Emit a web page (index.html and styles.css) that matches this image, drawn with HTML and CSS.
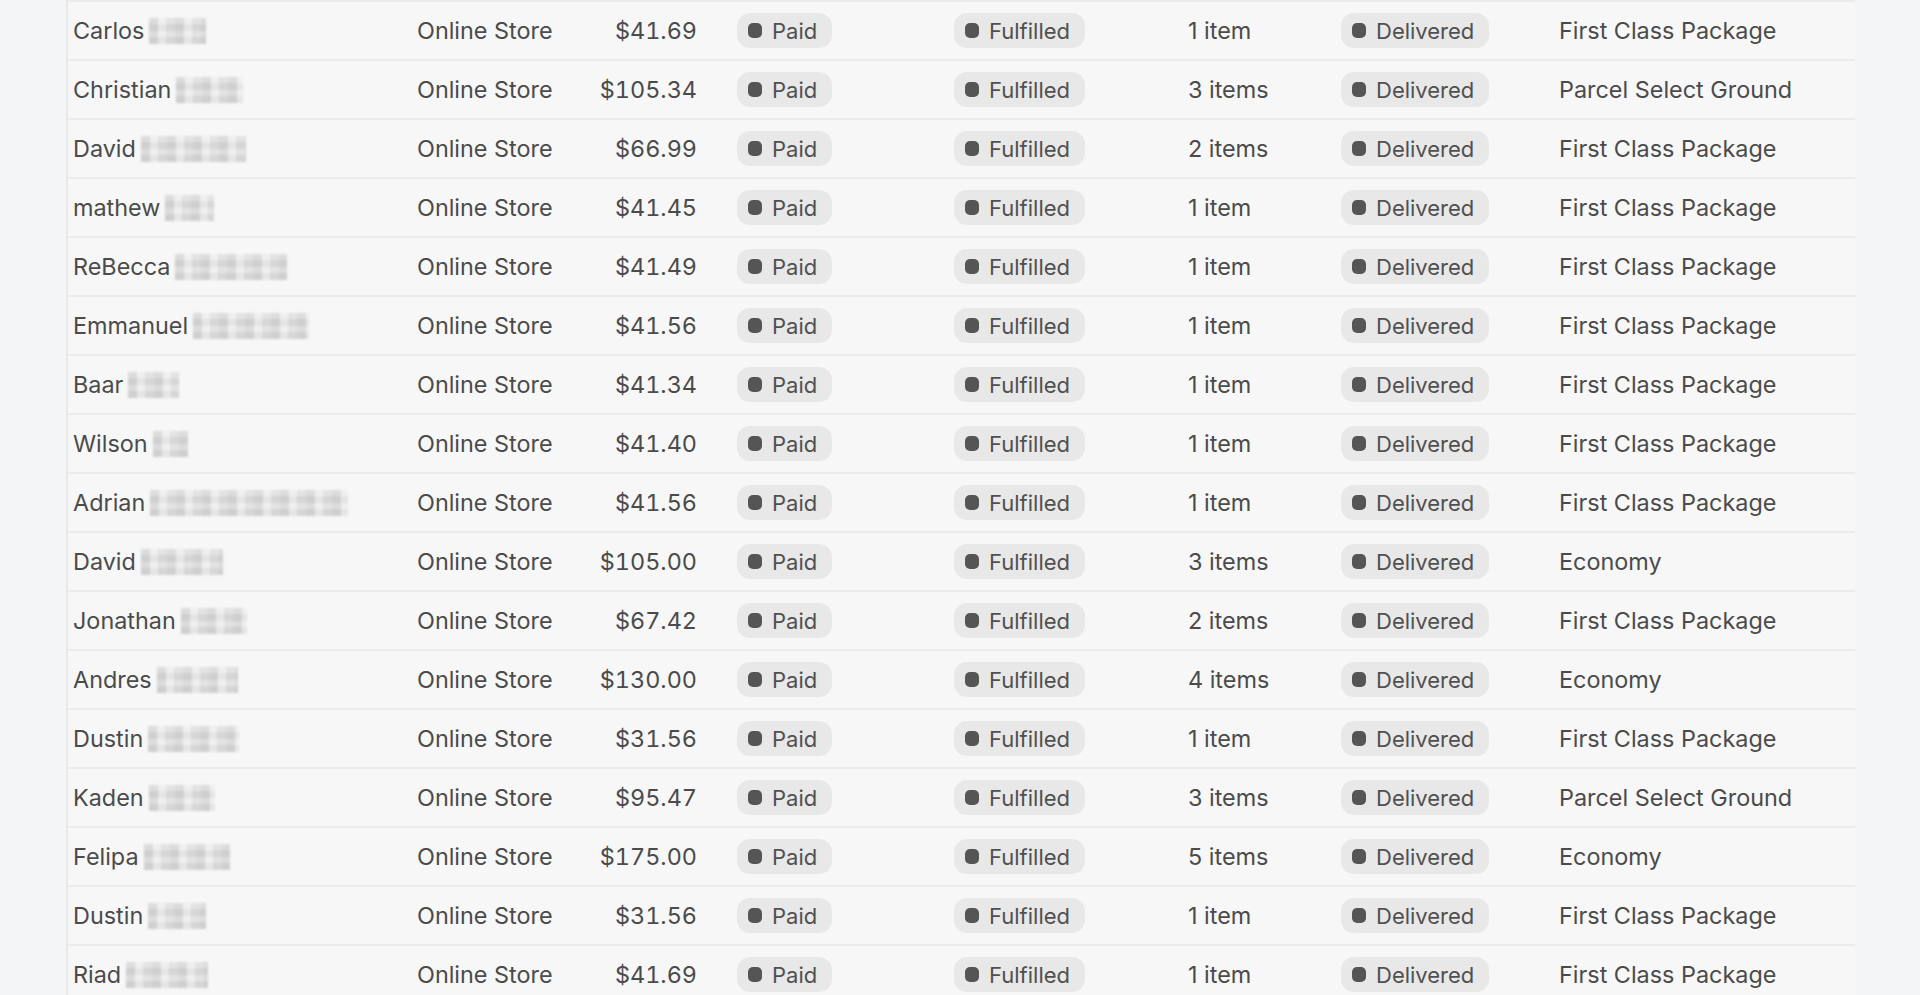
FILE: index.html
```html
<!DOCTYPE html>
<html lang="en">
<head>
<meta charset="utf-8">
<title>Orders</title>
<link rel="stylesheet" href="styles.css">
</head>
<body>
<div class="orders">
  <div class="row"><div class="c name">Carlos <span class="redact" style="width:57px"></span></div><div class="c">Online Store</div><div class="c total">$41.69</div><div class="c"><span class="badge"><i></i>Paid</span></div><div class="c"><span class="badge"><i></i>Fulfilled</span></div><div class="c">1 item</div><div class="c"><span class="badge"><i></i>Delivered</span></div><div class="c">First Class Package</div></div>
  <div class="row"><div class="c name">Christian <span class="redact" style="width:67px"></span></div><div class="c">Online Store</div><div class="c total">$105.34</div><div class="c"><span class="badge"><i></i>Paid</span></div><div class="c"><span class="badge"><i></i>Fulfilled</span></div><div class="c">3 items</div><div class="c"><span class="badge"><i></i>Delivered</span></div><div class="c">Parcel Select Ground</div></div>
  <div class="row"><div class="c name">David <span class="redact" style="width:105px"></span></div><div class="c">Online Store</div><div class="c total">$66.99</div><div class="c"><span class="badge"><i></i>Paid</span></div><div class="c"><span class="badge"><i></i>Fulfilled</span></div><div class="c">2 items</div><div class="c"><span class="badge"><i></i>Delivered</span></div><div class="c">First Class Package</div></div>
  <div class="row"><div class="c name">mathew <span class="redact" style="width:49px"></span></div><div class="c">Online Store</div><div class="c total">$41.45</div><div class="c"><span class="badge"><i></i>Paid</span></div><div class="c"><span class="badge"><i></i>Fulfilled</span></div><div class="c">1 item</div><div class="c"><span class="badge"><i></i>Delivered</span></div><div class="c">First Class Package</div></div>
  <div class="row"><div class="c name">ReBecca <span class="redact" style="width:112px"></span></div><div class="c">Online Store</div><div class="c total">$41.49</div><div class="c"><span class="badge"><i></i>Paid</span></div><div class="c"><span class="badge"><i></i>Fulfilled</span></div><div class="c">1 item</div><div class="c"><span class="badge"><i></i>Delivered</span></div><div class="c">First Class Package</div></div>
  <div class="row"><div class="c name">Emmanuel <span class="redact" style="width:116px"></span></div><div class="c">Online Store</div><div class="c total">$41.56</div><div class="c"><span class="badge"><i></i>Paid</span></div><div class="c"><span class="badge"><i></i>Fulfilled</span></div><div class="c">1 item</div><div class="c"><span class="badge"><i></i>Delivered</span></div><div class="c">First Class Package</div></div>
  <div class="row"><div class="c name">Baar <span class="redact" style="width:51px"></span></div><div class="c">Online Store</div><div class="c total">$41.34</div><div class="c"><span class="badge"><i></i>Paid</span></div><div class="c"><span class="badge"><i></i>Fulfilled</span></div><div class="c">1 item</div><div class="c"><span class="badge"><i></i>Delivered</span></div><div class="c">First Class Package</div></div>
  <div class="row"><div class="c name">Wilson <span class="redact" style="width:35px"></span></div><div class="c">Online Store</div><div class="c total">$41.40</div><div class="c"><span class="badge"><i></i>Paid</span></div><div class="c"><span class="badge"><i></i>Fulfilled</span></div><div class="c">1 item</div><div class="c"><span class="badge"><i></i>Delivered</span></div><div class="c">First Class Package</div></div>
  <div class="row"><div class="c name">Adrian <span class="redact" style="width:198px"></span></div><div class="c">Online Store</div><div class="c total">$41.56</div><div class="c"><span class="badge"><i></i>Paid</span></div><div class="c"><span class="badge"><i></i>Fulfilled</span></div><div class="c">1 item</div><div class="c"><span class="badge"><i></i>Delivered</span></div><div class="c">First Class Package</div></div>
  <div class="row"><div class="c name">David <span class="redact" style="width:82px"></span></div><div class="c">Online Store</div><div class="c total">$105.00</div><div class="c"><span class="badge"><i></i>Paid</span></div><div class="c"><span class="badge"><i></i>Fulfilled</span></div><div class="c">3 items</div><div class="c"><span class="badge"><i></i>Delivered</span></div><div class="c">Economy</div></div>
  <div class="row"><div class="c name">Jonathan <span class="redact" style="width:66px"></span></div><div class="c">Online Store</div><div class="c total">$67.42</div><div class="c"><span class="badge"><i></i>Paid</span></div><div class="c"><span class="badge"><i></i>Fulfilled</span></div><div class="c">2 items</div><div class="c"><span class="badge"><i></i>Delivered</span></div><div class="c">First Class Package</div></div>
  <div class="row"><div class="c name">Andres <span class="redact" style="width:81px"></span></div><div class="c">Online Store</div><div class="c total">$130.00</div><div class="c"><span class="badge"><i></i>Paid</span></div><div class="c"><span class="badge"><i></i>Fulfilled</span></div><div class="c">4 items</div><div class="c"><span class="badge"><i></i>Delivered</span></div><div class="c">Economy</div></div>
  <div class="row"><div class="c name">Dustin <span class="redact" style="width:91px"></span></div><div class="c">Online Store</div><div class="c total">$31.56</div><div class="c"><span class="badge"><i></i>Paid</span></div><div class="c"><span class="badge"><i></i>Fulfilled</span></div><div class="c">1 item</div><div class="c"><span class="badge"><i></i>Delivered</span></div><div class="c">First Class Package</div></div>
  <div class="row"><div class="c name">Kaden <span class="redact" style="width:66px"></span></div><div class="c">Online Store</div><div class="c total">$95.47</div><div class="c"><span class="badge"><i></i>Paid</span></div><div class="c"><span class="badge"><i></i>Fulfilled</span></div><div class="c">3 items</div><div class="c"><span class="badge"><i></i>Delivered</span></div><div class="c">Parcel Select Ground</div></div>
  <div class="row"><div class="c name">Felipa <span class="redact" style="width:86px"></span></div><div class="c">Online Store</div><div class="c total">$175.00</div><div class="c"><span class="badge"><i></i>Paid</span></div><div class="c"><span class="badge"><i></i>Fulfilled</span></div><div class="c">5 items</div><div class="c"><span class="badge"><i></i>Delivered</span></div><div class="c">Economy</div></div>
  <div class="row"><div class="c name">Dustin <span class="redact" style="width:58px"></span></div><div class="c">Online Store</div><div class="c total">$31.56</div><div class="c"><span class="badge"><i></i>Paid</span></div><div class="c"><span class="badge"><i></i>Fulfilled</span></div><div class="c">1 item</div><div class="c"><span class="badge"><i></i>Delivered</span></div><div class="c">First Class Package</div></div>
  <div class="row"><div class="c name">Riad <span class="redact" style="width:82px"></span></div><div class="c">Online Store</div><div class="c total">$41.69</div><div class="c"><span class="badge"><i></i>Paid</span></div><div class="c"><span class="badge"><i></i>Fulfilled</span></div><div class="c">1 item</div><div class="c"><span class="badge"><i></i>Delivered</span></div><div class="c">First Class Package</div></div>
</div>
</body>
</html>
```

FILE: styles.css
```css
html, body {
  margin: 0;
  padding: 0;
  height: 100%;
  overflow: hidden;
  background: #f4f5f7;
}
body {
  font-family: Inter, "Liberation Sans", sans-serif;
  font-size: 23.4px;
  color: #4b4b4b;
}
.orders {
  margin-left: 66px;
  width: 1789px;
  background: #f7f7f7;
  border-left: 2px solid #e9e9e9;
  box-sizing: border-box;
}
.row {
  display: grid;
  grid-template-columns: 304px 140px 100px 177px 194px 113px 178px 1fr;
  column-gap: 40px;
  align-items: center;
  height: 59px;
  box-sizing: border-box;
  border-top: 2px solid #ebebeb;
  padding-left: 5px;
}
.c {
  white-space: nowrap;
  display: flex;
  align-items: center;
}
.total {
  justify-content: flex-end;
  font-variant-numeric: tabular-nums;
}
.redact {
  display: inline-block;
  height: 26px;
  margin-left: 5px;
  background:
    linear-gradient(90deg, rgba(0,0,0,0.05) 33%, rgba(255,255,255,0.3) 33%, rgba(255,255,255,0.3) 66%, rgba(0,0,0,0.02) 66%) 0 0 / 26px 100%,
    linear-gradient(rgba(255,255,255,0.3) 50%, rgba(0,0,0,0.02) 50%) 0 0 / 100% 13px,
    #dedede;
  filter: blur(1.2px);
}
.badge {
  display: inline-flex;
  align-items: center;
  height: 35px;
  padding: 0 15px 0 11px;
  border-radius: 13px;
  background: #e8e8e8;
  color: #505050;
  font-size: 22px;
}
.badge i {
  display: block;
  width: 14px;
  height: 15px;
  border-radius: 5px;
  background: #555;
  margin-right: 10px;
}
```
